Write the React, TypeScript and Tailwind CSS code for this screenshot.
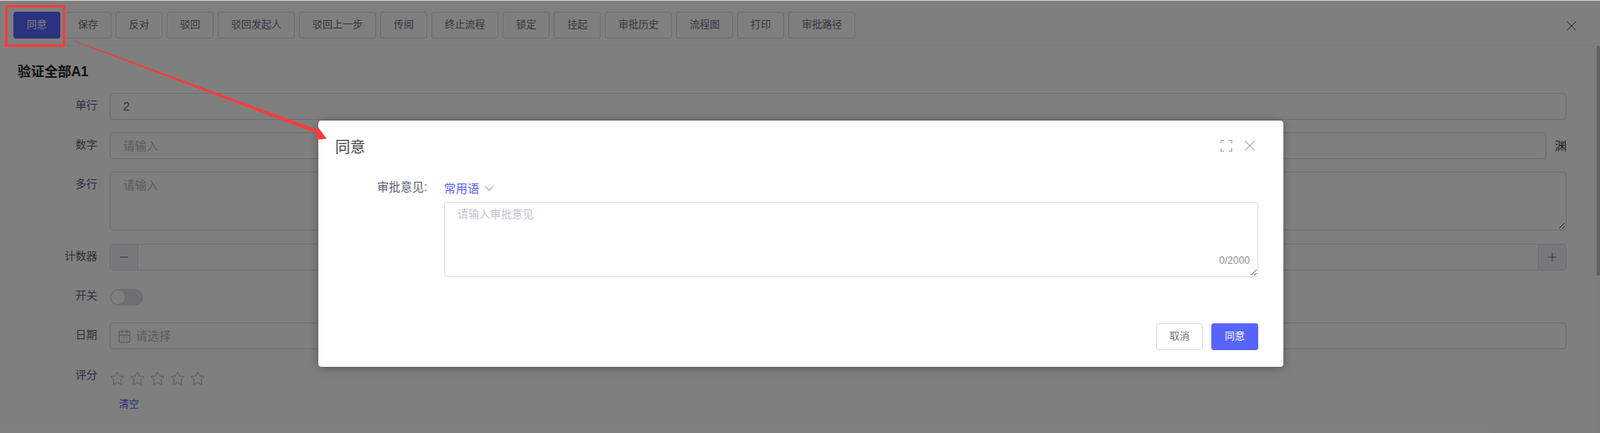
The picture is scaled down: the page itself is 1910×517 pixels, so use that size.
import { CalendarDays, ChevronDown, Minus, Plus, Star, X } from "lucide-react";
import type { ReactNode } from "react";

const actions = [
  "保存",
  "反对",
  "驳回",
  "驳回发起人",
  "驳回上一步",
  "传阅",
  "终止流程",
  "锁定",
  "挂起",
  "审批历史",
  "流程图",
  "打印",
  "审批路径",
];

const inputClass =
  "h-8 w-full rounded border border-[#dcdfe6] bg-white px-[15px] text-[14px] text-[#606266] outline-none placeholder:text-[#b4b7bd]";

function Field({ label, children, className }: { label: string; children: ReactNode; className?: string }) {
  return (
    <div className={`flex items-start ${className ?? ""}`}>
      <label className="w-[116px] shrink-0 pt-[6px] text-right text-[13px] leading-[18px] text-[#5a6270]">{label}</label>
      <div className="ml-[15px] flex-1">{children}</div>
    </div>
  );
}

function ExpandIcon() {
  return (
    <svg width="14" height="14" viewBox="0 0 14 14" fill="none" stroke="#a8abb2" strokeWidth="1.2">
      <path d="M0.6 4V0.6H4M10 0.6H13.4V4M13.4 10V13.4H10M4 13.4H0.6V10" />
    </svg>
  );
}

function Annotation() {
  return (
    <>
      <div className="absolute left-0 right-0 top-0 h-px bg-[#cfcfcf]" />
      <div className="absolute left-[6px] top-[6px] h-[50px] w-[72px] border-[3px] border-[#f53d3d]" />
      <svg className="absolute left-0 top-0" width="420" height="190" viewBox="0 0 420 190" fill="#f53d3d">
        <polygon points="89,48.4 89,49.4 381,160.5 382,156" />
        <polygon points="390,165.5 379,151 378,167" />
      </svg>
    </>
  );
}

function ApproveDialog() {
  return (
    <div className="h-[294px] w-[1152px] rounded bg-white shadow-[0_2px_12px_rgba(0,0,0,0.3)]">
      <div className="flex h-[60px] items-center justify-between pl-5 pr-[29px]">
        <h2 className="mt-1 text-[18px] font-normal leading-6 text-[#444]">同意</h2>
        <div className="flex items-center gap-[10px]">
          <ExpandIcon />
          <X size={22} strokeWidth={1.1} className="text-[#9a9da4]" />
        </div>
      </div>
      <div className="flex pr-[30px] pt-[10px]">
        <label className="w-[130px] shrink-0 text-right text-[14px] leading-[18px] text-[#5a6270]">审批意见:</label>
        <div className="ml-[20px] flex-1">
          <div className="mt-px flex h-5 items-center gap-[3px] text-[14px] text-[#5764ff]">
            常用语
            <ChevronDown size={18} strokeWidth={1.2} />
          </div>
          <div className="relative mt-[6px]">
            <textarea
              placeholder="请输入审批意见"
              className="block h-[90px] w-full rounded border border-[#dcdfe6] px-[15px] py-[4px] text-[13px] leading-5 outline-none placeholder:text-[#c0c4cc]"
            />
            <span className="absolute bottom-[11px] right-[10px] text-[12px] text-[#909399]">0/2000</span>
          </div>
        </div>
      </div>
      <div className="flex justify-end gap-[10px] pr-[30px] pt-[55px]">
        <button className="h-8 w-[56px] rounded-[3px] border border-[#dcdfe6] bg-white text-[12px] text-[#6b6f76]">取消</button>
        <button className="h-8 w-[56px] rounded-[3px] bg-[#5764ff] text-[12px] text-white">同意</button>
      </div>
    </div>
  );
}

export default function App() {
  return (
    <div className="relative flex h-[517px] flex-col overflow-hidden bg-white font-['Liberation_Sans','Noto_Sans_CJK_SC',sans-serif]">
      <div className="flex h-[55px] shrink-0 items-start gap-[5px] border-b border-[#f6f6f6] pl-4 pr-6 pt-[14px]">
        <button className="h-8 rounded-[3px] bg-[#5764ff] px-4 text-[12px] text-white">同意</button>
        {actions.map((action) => (
          <button key={action} className="h-8 rounded-[3px] border border-[#dcdfe6] bg-white px-[15px] text-[12px] text-[#6b6f76]">
            {action}
          </button>
        ))}
        <X size={20} strokeWidth={1.2} className="ml-auto mt-[7px] text-[#606266]" />
      </div>

      <div className="flex min-h-0 flex-1">
        <div className="flex-1 pr-[36px]">
          <h1 className="pl-[21px] pt-[21px] text-[16px] font-bold leading-5 text-[#222]">验证全部A1</h1>
          <div className="flex flex-col gap-[15px] pt-[15px]">
            <Field label="单行">
              <input defaultValue="2" className={inputClass} />
            </Field>
            <Field label="数字">
              <div className="flex items-center gap-[10px]">
                <input placeholder="请输入" className={inputClass} />
                <span className="text-[14px] text-[#444]">渊</span>
              </div>
            </Field>
            <Field label="多行">
              <textarea
                placeholder="请输入"
                className="block h-[70px] w-full rounded border border-[#dcdfe6] px-[15px] py-[5px] text-[14px] leading-5 outline-none placeholder:text-[#b4b7bd]"
              />
            </Field>
            <Field label="计数器" className="mt-px">
              <div className="flex h-8 rounded border border-[#dcdfe6]">
                <div className="flex w-[33px] items-center justify-center rounded-l border-r border-[#dcdfe6] bg-[#f0f2f7] text-[#606266]">
                  <Minus size={16} strokeWidth={1.3} />
                </div>
                <div className="flex-1" />
                <div className="flex w-[33px] items-center justify-center rounded-r border-l border-[#dcdfe6] bg-[#f0f2f7] text-[#606266]">
                  <Plus size={16} strokeWidth={1.3} />
                </div>
              </div>
            </Field>
            <Field label="开关" className="h-8">
              <div className="mt-[7px] flex h-5 w-10 items-center rounded-full bg-[#dcdfe6] px-[2px]">
                <div className="h-4 w-4 rounded-full bg-white" />
              </div>
            </Field>
            <Field label="日期">
              <div className="flex h-8 items-center gap-[5px] rounded border border-[#dcdfe6] bg-white pl-2 text-[14px] text-[#b4b7bd]">
                <CalendarDays size={17} strokeWidth={1.6} />
                请选择
              </div>
            </Field>
            <Field label="评分" className="mt-px">
              <div className="flex gap-[6px] pt-[10px] text-[#c0c4cc]">
                {[0, 1, 2, 3, 4].map((n) => (
                  <Star key={n} size={18} strokeWidth={1.5} />
                ))}
              </div>
              <div className="pl-[11px] pt-[13px] text-[12px] text-[#5764ff]">清空</div>
            </Field>
          </div>
        </div>
        <div className="w-1 bg-[#fafafa]">
          <div className="h-[274px] bg-[#c4c4c4]" />
        </div>
      </div>

      <div className="absolute inset-0 bg-black/50" />
      <div className="absolute inset-0 pl-[380px] pt-[144px]">
        <ApproveDialog />
      </div>
      <Annotation />
    </div>
  );
}
